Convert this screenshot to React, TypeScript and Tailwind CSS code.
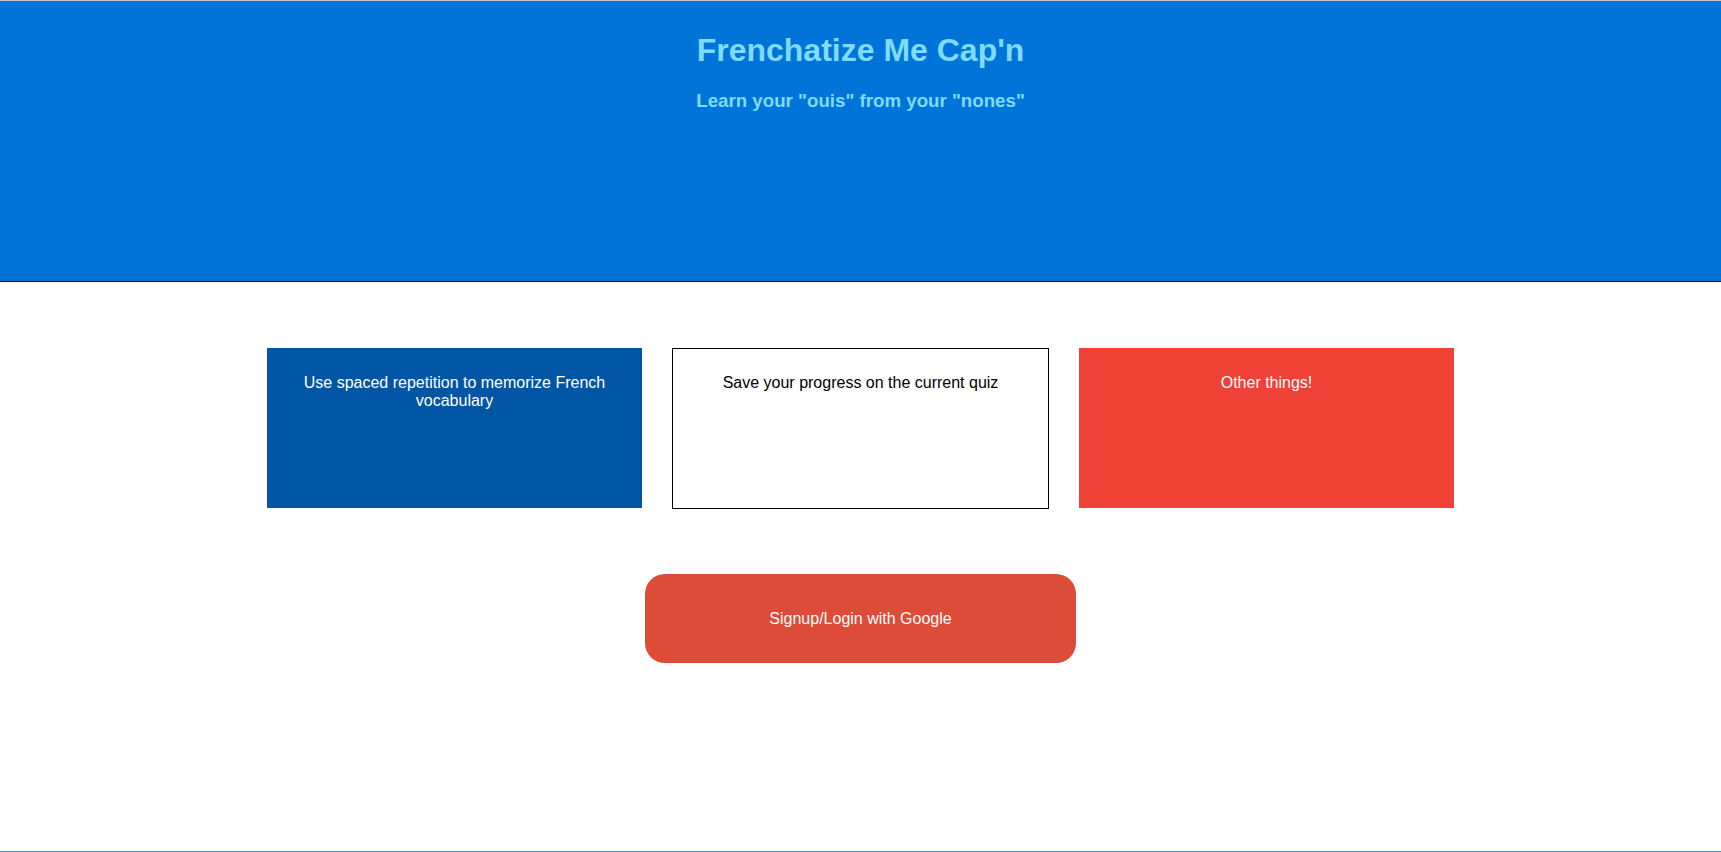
export default function App() {
  return (
    <div className="flex h-[852px] flex-col bg-white font-['Liberation_Sans',Arial,sans-serif]">
      <header className="h-[282px] shrink-0 border-t border-b border-t-[#c8c8c8] border-b-black bg-[#0074d9] pt-[10px] text-center font-bold text-[#7fdbff]">
        <h1 className="mt-[21px] text-[32px] leading-[37px]">Frenchatize Me Cap'n</h1>
        <h3 className="mt-[21px] text-[18.72px] leading-[22px]">Learn your "ouis" from your "nones"</h3>
      </header>

      <main className="flex flex-1 flex-col items-center pt-[66px]">
        <div className="flex gap-[30px] text-center text-base leading-[18px]">
          <div className="h-[160px] w-[375px] bg-[#0055a4] px-[10px] pt-[26px] text-white">
            <p>Use spaced repetition to memorize French vocabulary</p>
          </div>
          <div className="h-[161px] w-[377px] border border-black bg-white px-[10px] pt-[25px] text-black">
            <p>Save your progress on the current quiz</p>
          </div>
          <div className="h-[160px] w-[375px] bg-[#ef4135] px-[10px] pt-[26px] text-white">
            <p>Other things!</p>
          </div>
        </div>

        <button
          type="button"
          className="mt-[65px] h-[89px] w-[431px] cursor-pointer rounded-[20px] bg-[#dd4b39] text-base text-white"
        >
          Signup/Login with Google
        </button>
      </main>

      <footer className="h-px shrink-0 bg-[#3a93d8]" />
    </div>
  );
}
